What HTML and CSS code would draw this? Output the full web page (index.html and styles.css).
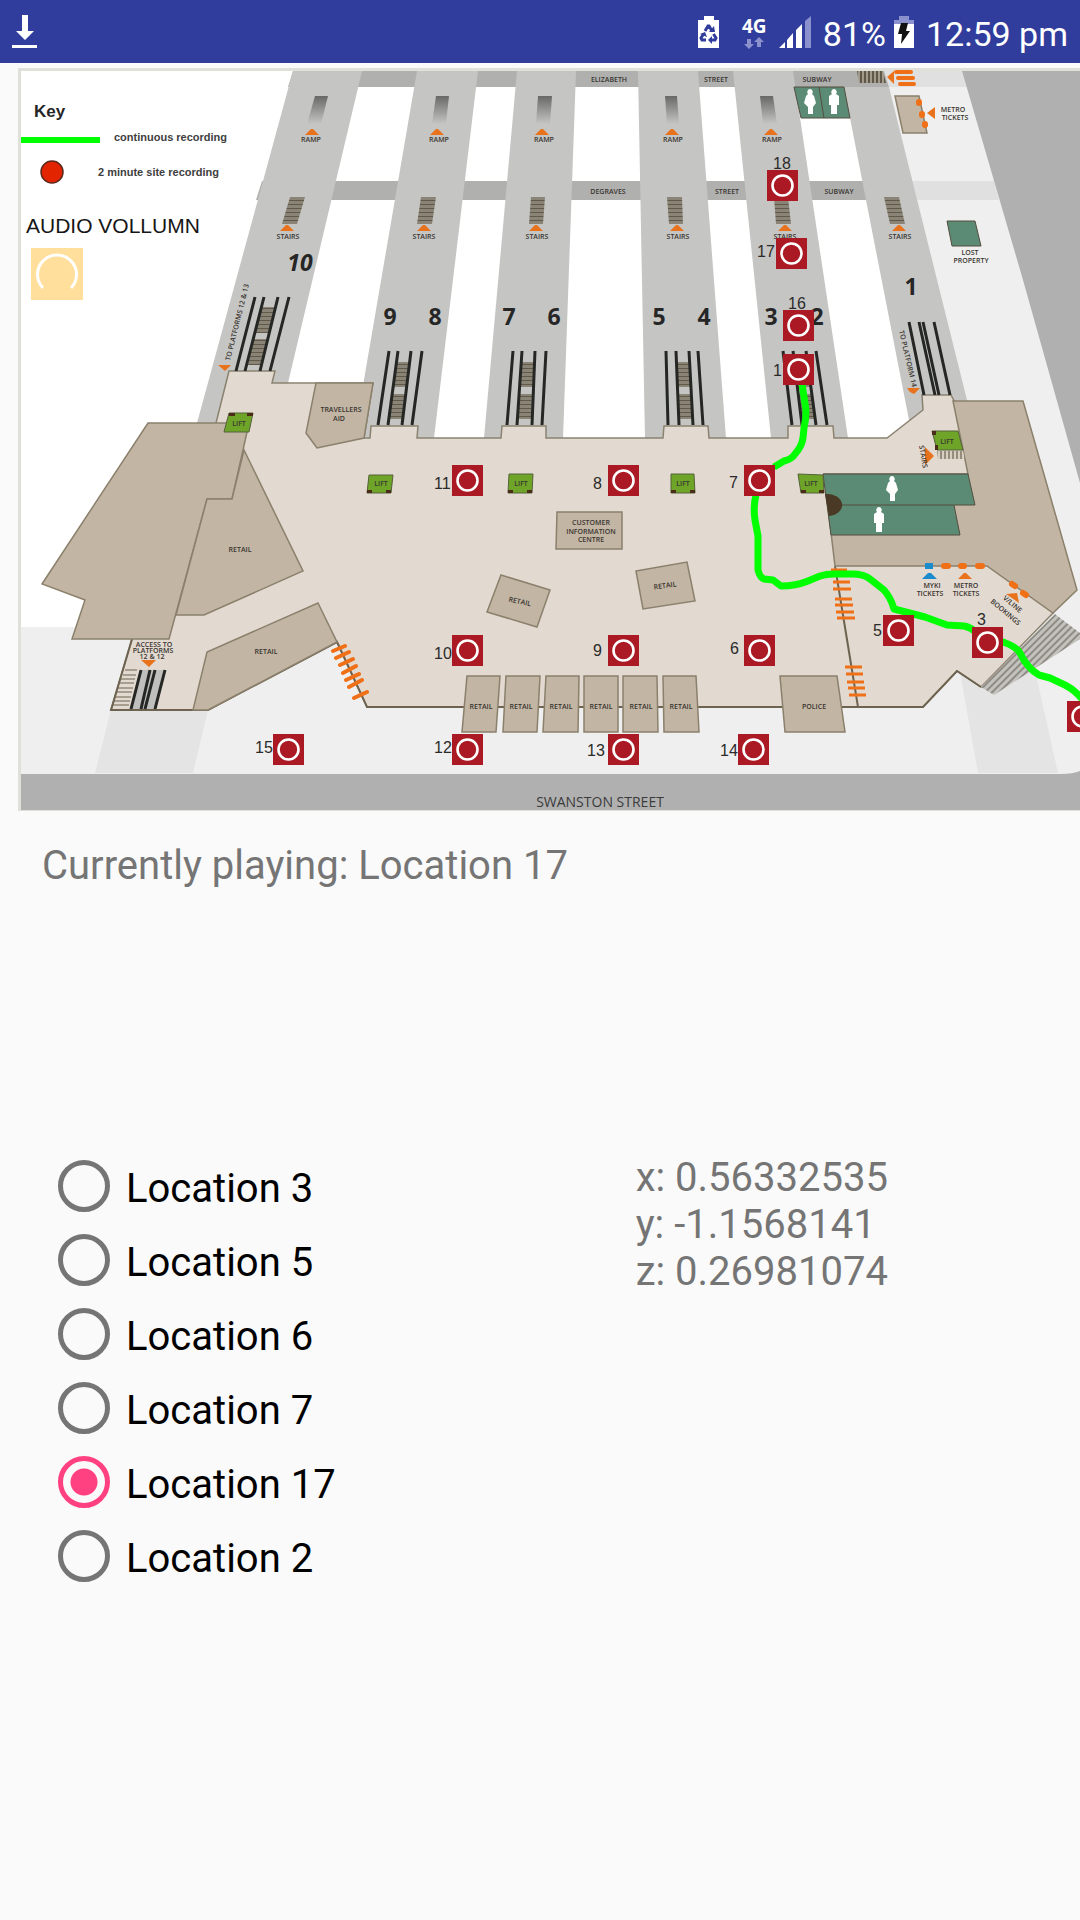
FILE: index.html
```html
<!DOCTYPE html>
<html lang="en">
<head>
<meta charset="utf-8">
<meta name="viewport" content="width=device-width, initial-scale=1">
<title>Station sound map</title>
<link rel="stylesheet" href="styles.css">
</head>
<body>
<header class="status">
  <svg class="icon" width="26" height="34" viewBox="0 0 26 34" aria-label="Download complete"><path fill="#fff" d="M10 0h6v16h6l-9 9-9-9h6zM0 30h25v3H0z"/></svg>
  <div class="status-right">
    <svg class="icon" width="21" height="32" viewBox="0 0 21 32" aria-label="Power saving"><path fill="#fff" d="M6 0h10v4h5v28H0V4h6z"/><g fill="none" stroke="#303d9d" stroke-width="3"><path d="M7 15l3-5h1l3 5M15.500 18l2.500 4-1 2h-4M8 24H4l-1-2 2.500-4"/></g><path fill="#303d9d" d="M11 16h6l-1-6zM14 20v8l-4-4zM2 18l5-2 2 5z"/></svg>
    <svg class="icon network" width="34" height="40" viewBox="738 11 34 40"><text class="net" x="741" y="32">4G</text><path fill="#8a91cd" d="M746 38h4v5h3l-5 5-5-5h3zM756 46h4v-5h3l-5-5-5 5h3z"/></svg>
    <svg class="icon signal" width="32" height="32" viewBox="0 0 32 32" aria-label="Signal"><path fill="#fff" d="M0 32l6-6v6zM8 24l6-7v15H8zM17 14l6-6v24h-6z"/><path fill="#8a91cd" d="M26 5l6-5v32h-6z"/></svg>
    <span class="percent">81%</span>
    <svg class="icon" width="20" height="32" viewBox="0 0 20 32" aria-label="Charging"><path fill="#8a91cd" d="M5 0h10v4h5v5H0V4h5z"/><path fill="#fff" d="M0 8h20v24H0z"/><path fill="#111" d="M7 7h7l-2 8h4L7 28l1-10H4z"/></svg>
    <time class="clock">12:59 pm</time>
  </div>
</header>
<main>
<section class="map-wrap" aria-label="Station map">
<svg class="map" viewBox="18 68 1062 743">
  <defs>
    <linearGradient id="ramp" x1="0" y1="0" x2="0" y2="1"><stop offset="0" stop-color="#686867"/><stop offset="1" stop-color="#c5c5c3"/></linearGradient>
    <pattern id="steps" width="20" height="4" patternUnits="userSpaceOnUse"><path fill="#8a8477" d="M0 0h20v4H0z"/><path fill="#605849" d="M0 0h20v1H0z"/></pattern>
    <pattern id="vsteps" width="4" height="20" patternUnits="userSpaceOnUse"><path fill="#a29a8b" d="M0 0h4v20H0z"/><path fill="#5f5748" d="M0 0h2v20H0z"/></pattern>
    <pattern id="lsteps" width="4" height="20" patternUnits="userSpaceOnUse"><path fill="#d8cfc3" d="M0 0h4v20H0z"/><path fill="#968c7c" d="M0 0h2v20H0z"/></pattern>
    <pattern id="dsteps" width="5" height="5" patternUnits="userSpaceOnUse" patternTransform="rotate(-45)"><path fill="#c4c2bd" d="M0 0h5v5H0z"/><path fill="#8f8c86" d="M0 0h5v2H0z"/></pattern>
    <symbol id="pin" viewBox="0 0 31 31"><path fill="#ab1a24" d="M0 0h31v31H0z"/><circle cx="15.500" cy="15.500" r="10" fill="none" stroke="#fff" stroke-width="2.600"/></symbol>
    <symbol id="man" viewBox="0 0 12 25"><path fill="#fff" d="M6 0a3 3 0 0 1 2 5l3 2v9H9v9H3v-9H1V7l3-2a3 3 0 0 1 2-5z"/></symbol>
    <symbol id="woman" viewBox="0 0 12 25"><path fill="#fff" d="M6 0a3 3 0 0 1 2 5l2 2 2 7-3 4v7H4v-7l-4-4 2-7 2-2a3 3 0 0 1 2-5z"/></symbol>
    <path id="up" fill="#e8731c" d="M-7 7L-1 1h2l6 6z"/>
  </defs>
  <path fill="#e0e0da" d="M18 68h1062v743H18z"/>
  <path fill="#fff" d="M21 71h1059v739H21z"/>
  <path fill="#efefef" d="M21 627h1059v147H21zM884 71h196v560H950z"/>
  <path fill="#e0e0e0" d="M884 71h78l5 16h-78zM911 181h83l5 19h-83z"/>
  <path fill="#b0b0b0" d="M962 71h118v412l-57-203zM21 774h1040q12 0 19-3v39H21z"/>
  <path fill="#b0b0af" d="M293 71h591l5 16H288zM262 181h640v19H256z"/>
  <g fill="#c5c5c3"><path d="M293 71h69l-74 312-10 40h-81zM417 71h61l-44 367h-80zM517 71h59l-13 367h-79zM638 71h60l28 367h-81zM733 71h60l55 367h-77zM841 87h48l78 313v20h-58l-59-302z"/></g>
  <path fill="#e4e4e4" d="M111 710h97l-15 63H95zM960 672l21 15 50-35 27 121h-80z"/>

  <!-- concourse -->
  <path class="floor" d="M229 371h46l-3 12h101l-9 55h6l1-12h47l-1 12h84l1-12h44v12h117l1-12h44l1 12h79v-12h45l1 12h53l36-28-1-15h29l80 150 22 68-72 74-24-16-34 36H367l-30-65-129 68h-97l21-71 37-100 47-116z"/>
  <path class="wall" d="M132 639l-21 71h97l129-68 30 65h556l34-36 24 16M835 566l23 141"/>
  <g class="block">
    <path d="M148 423h101l-6 27-11 49h-25l-38 140H72l13-39-43-16z"/>
    <path d="M244 450l59 121-99 44h-28l31-116h25z"/>
    <path d="M318 603l19 39-129 68h-15l14-58z"/>
    <path d="M316 383h57l-9 55-47 10-11-15z"/>
    <path d="M953 401h70l54 189-24 23-66-47H835l-11-92h144z"/>
    <path d="M780 676h57l8 56h-60z"/>
    <path d="M467 676h33l-4 56h-34zM506 676h34l-3 56h-34zM546 676h33l-1 56h-35zM584 676h34v56h-34zM623 676h34l1 56h-35zM663 676h33l3 56h-35z"/>
    <path d="M557 512h65v37h-66zM501 575l49 15-13 37-50-15zM636 571l51-9 8 39-52 8zM895 96h24l8 37h-24z"/>
  </g>
  <g fill="#5b8b75" stroke="#554d3f"><path d="M823 474h145l7 31h-21l6 30H831zM829 505h125M947 221h28l6 25h-29zM794 87h50l6 31h-49zM819 87l5 31"/></g>
  <path fill="#4a3a25" d="M825 494a15 11 0 0 1 4 22z"/>
  <use href="#woman" x="804" y="89" width="12" height="25"/><use href="#man" x="828" y="89" width="12" height="25"/>
  <use href="#woman" x="886" y="476" width="12" height="25"/><use href="#man" x="873" y="507" width="12" height="25"/>

  <!-- lifts -->
  <g fill="#6ea528" stroke="#55603a"><path d="M229 413h24l-4 19h-25zM369 475h24l-2 18h-24zM509 474h24l-1 19h-24zM671 474h23l1 19h-24zM798 474l25 1 1 18h-23zM932 431h26l5 19h-26z"/></g>
  <path fill="#4a2c18" d="M229 413h6v3h-6zM247 413h6v3h-6zM367 490h5v3h-5zM386 490h5v3h-5zM508 490h5v3h-5zM527 490h5v3h-5zM671 490h5v3h-5zM690 490h5v3h-5zM801 490h5v3h-5zM819 490h5v3h-5zM932 431h4v4h-4zM935 445h3v5h-3z"/>
  <g class="tiny mid"><text x="239" y="426">LIFT</text><text x="381" y="486">LIFT</text><text x="521" y="486">LIFT</text><text x="683" y="486">LIFT</text><text x="811" y="486">LIFT</text><text x="947" y="444">LIFT</text></g>

  <!-- ramps and stairs -->
  <g fill="url(#ramp)"><path d="M315 96h13l-7 28h-14z"/><path d="M436 96h13l-3 28h-14z"/><path d="M538 96h14l-2 28h-14z"/><path d="M665 96h12l2 28h-12z"/><path d="M760 96h13l4 28h-14z"/></g>
  <g fill="url(#steps)"><path d="M290 197h15l-8 27h-15zM421 197h15l-4 27h-15zM531 197h14l-2 27h-14zM667 197h15l1 27h-14zM774 197h14l3 27h-15zM884 197h15l6 27h-15z"/>
  <path d="M262 307h13l-6 26h-14zM254 339h13l-6 26h-13zM396 362h14l-3 25h-14zM392 394h13l-3 25h-14zM522 362h12l-1 25h-13zM519 394h13l-1 25h-13zM677 362h12l2 25h-13zM679 394h12l1 25h-13zM796 362h12l3 25h-12zM800 394h12l4 25h-14z"/></g>
  <path fill="url(#vsteps)" d="M857 71h26l3 12h-27z"/><path fill="url(#lsteps)" d="M937 451h26l2 8h-27z"/>
  <path fill="url(#dsteps)" d="M1055 614l25 19v6l-86 56-13-8z"/>
  <g class="rail"><path d="M255 297l-19 74M264 297l-19 74M278 297l-18 74M289 297l-19 74M389 351l-11 74M398 351l-10 74M411 351l-9 74M422 351l-10 74M513 351l-6 74M522 351l-5 74M535 351l-3 74M546 351l-4 74M666 351l2 74M676 351l3 74M689 351l4 74M698 351l5 74M783 351l9 74M793 351l9 74M806 351l10 74M816 351l11 74M909 322l15 73M919 322l16 73M923 322l16 73M934 322l16 73"/></g>
  <path fill="#bfbfbd" d="M141 670h24l-10 39h-24z"/><path class="rail" d="M141 670l-10 39M150 670l-9 39M155 670l-10 39M165 670l-10 39"/>
  <path class="wire" d="M125 670h12M123 675h13M121 679h14M120 683h14M118 688h15M117 692h15M115 697h16M114 701h16M113 705h16"/>

  <use href="#up" x="312" y="128"/><use href="#up" x="437" y="128"/><use href="#up" x="542" y="128"/><use href="#up" x="672" y="128"/><use href="#up" x="771" y="128"/>
  <use href="#up" x="287" y="224"/><use href="#up" x="424" y="224"/><use href="#up" x="536" y="224"/><use href="#up" x="677" y="224"/><use href="#up" x="785" y="224"/><use href="#up" x="899" y="224"/>
  <use href="#up" x="965" y="572"/>
  <path fill="#e8731c" d="M218 365h13l-6 6zM907 388h13l-6 6-4-2zM925 447l9 9-9 9zM141 660h15l-7 7zM887 77l7-6v13zM927 113l8-6v12zM1006 594l11-1 2 10z"/>
  <path fill="#1c8bcb" d="M922 579l6-6h3l6 6zM925 563h8v6h-8z"/>
  <g fill="none" stroke="#f07018" stroke-linecap="round" stroke-width="4">
    <path d="M896 72h15M898 78h15M900 84h14M333 651l12-5M336 658l13-6M340 665l13-6M343 673l13-7M346 680l13-6M349 687l13-7M354 698l13-6"/>
    <path stroke-width="6" d="M919 102v1M922 114v1M925 124v1M944 566h4M961 566h3M978 566h4M1012 584l3 2M1023 593l3 2"/>
    <path stroke-linecap="butt" stroke-width="3" d="M831 570h16M833 582h17M833 589h18M835 599h17M835 605h18M836 612h18M837 618h18M845 667h17M846 674h17M847 682h17M848 688h17M849 695h17"/>
  </g>

  <!-- printed labels -->
  <g class="tiny mid">
    <text x="609" y="82">ELIZABETH</text><text x="716" y="82">STREET</text><text x="817" y="82">SUBWAY</text>
    <text x="608" y="194">DEGRAVES</text><text x="727" y="194">STREET</text><text x="839" y="194">SUBWAY</text>
    <text x="311" y="142">RAMP</text><text x="439" y="142">RAMP</text><text x="544" y="142">RAMP</text><text x="673" y="142">RAMP</text><text x="772" y="142">RAMP</text>
    <text x="288" y="239">STAIRS</text><text x="424" y="239">STAIRS</text><text x="537" y="239">STAIRS</text><text x="678" y="239">STAIRS</text><text x="785" y="239">STAIRS</text><text x="900" y="239">STAIRS</text>
    <text x="953" y="112">METRO</text><text x="955" y="120">TICKETS</text>
    <text x="970" y="255">LOST</text><text x="971" y="263">PROPERTY</text>
    <text x="341" y="412">TRAVELLERS</text><text x="339" y="421">AID</text>
    <text x="591" y="525">CUSTOMER</text><text x="591" y="534">INFORMATION</text><text x="591" y="542">CENTRE</text>
    <text x="240" y="552">RETAIL</text><text x="266" y="654">RETAIL</text>
    <text x="520" y="604" transform="rotate(12 520 601)">RETAIL</text><text x="665" y="588" transform="rotate(-8 665 585)">RETAIL</text>
    <text x="481" y="709">RETAIL</text><text x="521" y="709">RETAIL</text><text x="561" y="709">RETAIL</text><text x="601" y="709">RETAIL</text><text x="641" y="709">RETAIL</text><text x="681" y="709">RETAIL</text>
    <text x="814" y="709">POLICE</text>
    <text x="932" y="588">MYKI</text><text x="930" y="596">TICKETS</text><text x="966" y="588">METRO</text><text x="966" y="596">TICKETS</text>
    <text x="1011" y="606" transform="rotate(40 1011 606)">V/LINE</text><text x="1004" y="614" transform="rotate(40 1004 614)">BOOKINGS</text>
    <text x="154" y="647">ACCESS TO</text><text x="153" y="653">PLATFORMS</text><text x="152" y="659">12 &amp; 12</text>
    <text x="921" y="457" transform="rotate(80 921 457)">STAIRS</text>
  </g>
  <text class="tiny" x="230" y="361" transform="rotate(-76 230 361)">TO PLATFORMS 12 &amp; 13</text>
  <text class="tiny" x="899" y="331" transform="rotate(77 899 331)">TO PLATFORM 14</text>
  <text class="road mid" x="600" y="807">SWANSTON STREET</text>
  <g class="platform mid"><text class="lean" x="300" y="271">10</text><text x="390" y="325">9</text><text x="435" y="325">8</text><text x="509" y="325">7</text><text x="554" y="325">6</text><text x="659" y="325">5</text><text x="704" y="325">4</text><text x="771" y="325">3</text><text x="817" y="325">2</text><text x="911" y="295">1</text></g>

  <!-- key -->
  <text class="key-title" x="34" y="117">Key</text>
  <path fill="#0f0" d="M21 137h79v6H21z"/><text class="key-text" x="114" y="141">continuous recording</text>
  <circle cx="52" cy="172" r="11" fill="#e32400" stroke="#5b2a20" stroke-width="1.500"/><text class="key-text" x="98" y="176">2 minute site recording</text>
  <text class="volume" x="26" y="233">AUDIO VOLLUMN</text>
  <path fill="#ffdf9b" d="M31 248h52v52H31z"/><path fill="none" stroke="#fff" stroke-width="3" d="M43 288a19.500 19.500 0 1 1 28 0"/>

  <path class="route" d="M802 384L806 410Q806 420 804 428L803 438Q802 446 795 454Q792 459 784 461L774 467M756 495Q753 506 755 520L758 536V570Q760 578 764 579L773 580 781 586Q796 586 808 581L820 576Q826 574 834 574L852 574Q864 574 870 579L884 590Q891 598 894 609L925 617 947 625 964 626Q970 627 976 632M1000 641Q1016 646 1020 653Q1027 668 1039 675L1050 678 1065 685Q1075 690 1082 699"/>
  <g class="pins">
    <a href="#loc17"><use href="#pin" x="776" y="238" width="31" height="31"/><text x="757" y="257">17</text></a>
    <a href="#map-18"><use href="#pin" x="767" y="170" width="31" height="31"/><text x="773" y="169">18</text></a>
    <a href="#map-16"><use href="#pin" x="783" y="310" width="31" height="31"/><text x="788" y="309">16</text></a>
    <a href="#map-1"><use href="#pin" x="783" y="354" width="31" height="31"/><text x="773" y="376">1</text></a>
    <a href="#loc7"><use href="#pin" x="744" y="465" width="31" height="31"/><text x="729" y="488">7</text></a>
    <a href="#map-8"><use href="#pin" x="608" y="465" width="31" height="31"/><text x="593" y="489">8</text></a>
    <a href="#map-11"><use href="#pin" x="452" y="465" width="31" height="31"/><text x="434" y="489">11</text></a>
    <a href="#map-10"><use href="#pin" x="452" y="635" width="31" height="31"/><text x="434" y="659">10</text></a>
    <a href="#map-9"><use href="#pin" x="608" y="635" width="31" height="31"/><text x="593" y="656">9</text></a>
    <a href="#loc6"><use href="#pin" x="744" y="635" width="31" height="31"/><text x="730" y="654">6</text></a>
    <a href="#map-12"><use href="#pin" x="452" y="734" width="31" height="31"/><text x="434" y="753">12</text></a>
    <a href="#map-13"><use href="#pin" x="608" y="734" width="31" height="31"/><text x="587" y="756">13</text></a>
    <a href="#map-14"><use href="#pin" x="738" y="734" width="31" height="31"/><text x="720" y="756">14</text></a>
    <a href="#map-15"><use href="#pin" x="273" y="734" width="31" height="31"/><text x="255" y="753">15</text></a>
    <a href="#loc5"><use href="#pin" x="883" y="615" width="31" height="31"/><text x="873" y="636">5</text></a>
    <a href="#loc3"><use href="#pin" x="972" y="627" width="31" height="31"/><text x="977" y="625">3</text></a>
    <a href="#loc2" aria-label="2"><use href="#pin" x="1067" y="701" width="31" height="31"/></a>
  </g>
</svg>
</section>
<p class="playing">Currently playing: Location 17</p>
<section class="panel">
  <form class="choices">
    <label class="choice" for="loc3"><input type="radio" name="location" id="loc3"><span>Location 3</span></label>
    <label class="choice" for="loc5"><input type="radio" name="location" id="loc5"><span>Location 5</span></label>
    <label class="choice" for="loc6"><input type="radio" name="location" id="loc6"><span>Location 6</span></label>
    <label class="choice" for="loc7"><input type="radio" name="location" id="loc7"><span>Location 7</span></label>
    <label class="choice" for="loc17"><input type="radio" name="location" id="loc17" checked><span>Location 17</span></label>
    <label class="choice" for="loc2"><input type="radio" name="location" id="loc2"><span>Location 2</span></label>
  </form>
  <div class="sensor"><div>x: 0.56332535</div><div>y: -1.1568141</div><div>z: 0.26981074</div></div>
</section>
</main>
</body>
</html>
```

FILE: styles.css
```css
* { box-sizing: border-box; }
body {
  margin: 0;
  min-height: 100vh;
  background: #fafafa;
  color: #757575;
  font: 40px/47px Roboto, sans-serif;
}
.status {
  display: flex;
  justify-content: space-between;
  align-items: center;
  height: 63px;
  padding: 0 12px;
  background: #303d9d;
  color: #fff;
  font-size: 34px;
  line-height: 40px;
}
.status-right { display: flex; align-items: center; }
.icon { display: block; flex: none; }
.network { margin-left: 20px; }
.signal { margin-left: 6px; }
.percent { margin: 4px 8px 0 12px; }
.clock { margin: 4px 0 0 12px; }
.net { font: 700 19px "Noto Sans", sans-serif; fill: #fff; }

.map-wrap { padding: 5px 0 0 18px; }
.map { display: block; width: 100%; height: auto; }
.floor { fill: #e2d9d0; stroke: #8b8270; stroke-width: 1.5; }
.wall { fill: none; stroke: #6d6350; stroke-width: 2; }
.block { fill: #c2b5a3; stroke: #8b806c; stroke-width: 1.5; }
.rail { fill: none; stroke: #252724; stroke-width: 3; }
.wire { fill: none; stroke: #6d6350; stroke-width: 1; }
.route { fill: none; stroke: #0f0; stroke-width: 7; stroke-linejoin: round; }
.mid { text-anchor: middle; }
.tiny { font: 600 7px "Open Sans", sans-serif; fill: #3a3631; }
.road { font: 500 14px "Open Sans", sans-serif; fill: #3b3b3b; }
.platform { font: 700 23px "Open Sans", sans-serif; fill: #262626; }
.lean { font-style: italic; }
.key-title { font: 700 17px "Liberation Sans", sans-serif; fill: #262626; }
.key-text { font: 700 11px "Liberation Sans", sans-serif; fill: #404040; }
.volume { font: 21px "Liberation Sans", sans-serif; fill: #161616; }
.pins { font: 16px "Liberation Sans", sans-serif; fill: #2b2b2b; }

.playing { margin: 31px 42px 0; }
.panel {
  display: grid;
  grid-template-columns: 13fr 10fr;
  margin-top: 260px;
  padding-left: 58px;
}
.choices { display: flex; flex-direction: column; }
.choice {
  display: flex;
  align-items: center;
  gap: 16px;
  height: 74px;
  color: #000;
}
.choice span { padding-top: 4px; }
.choice input {
  appearance: none;
  width: 52px;
  height: 52px;
  margin: 0;
  border: 5px solid #757575;
  border-radius: 50%;
}
.choice input:checked {
  border-color: #ff4081;
  background: radial-gradient(circle, #ff4081 13px, transparent 14px);
}
.sensor { padding-top: 5px; }
```
